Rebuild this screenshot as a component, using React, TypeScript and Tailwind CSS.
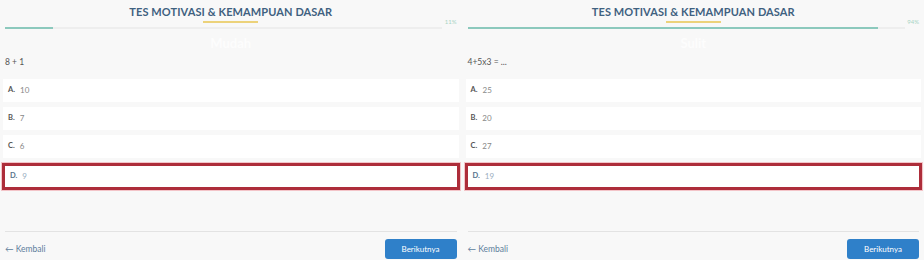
import React from "react";

type Option = { key: string; value: string };

type PanelProps = {
  percent: number;
  level: string;
  question: string;
  options: Option[];
  selected: string;
};

const font = { fontFamily: "Lato, 'Open Sans', sans-serif" };

function Panel({ percent, level, question, options, selected }: PanelProps) {
  return (
    <div className="w-[462px] h-[260px] flex flex-col bg-[#f8f8f8]">
      <div className="pt-[5px] flex flex-col items-center">
        <h1 className="text-[11px] leading-[13px] font-bold text-[#3f6180] tracking-[0.1px]">
          TES MOTIVASI &amp; KEMAMPUAN DASAR
        </h1>
        <div className="w-[55px] h-[1.5px] mt-[3px] bg-[#ecd27a]" />
      </div>
      <div className="flex items-start px-[5px] mt-[3px]">
        <div className="w-[437px] h-[2px] mt-[1px] bg-[#eeeeee]">
          <div className="h-full bg-[#8cc9bd]" style={{ width: `${percent}%` }} />
        </div>
        <span className="ml-auto -mt-[9px] text-[6px] text-[#a8d4c4]">{percent}%</span>
      </div>
      <div className="h-[22px] mt-[4px] flex items-center justify-center">
        <span className="text-[13px] font-bold text-[#fdfdfd]">{level}</span>
      </div>
      <p className="px-[5px] mt-[1px] text-[8.5px] leading-[12px] text-[#555]">{question}</p>
      <div className="mt-[11px] px-[3px] flex flex-col gap-[5px]">
        {options.map((o) =>
          o.key === selected ? (
            <div
              key={o.key}
              className="-mx-[1px] h-[27px] border-[3px] border-[#ad2d3a] ring-1 ring-[#f3c4c8] bg-white flex items-center px-[5px]"
            >
              <span className="text-[7.5px] font-bold text-[#56738c]">{o.key}.</span>
              <span className="ml-[5px] text-[8px] text-[#9aaec0]">{o.value}</span>
            </div>
          ) : (
            <div key={o.key} className="h-[23px] bg-white flex items-center px-[5px]">
              <span className="text-[7.5px] font-bold text-[#555]">{o.key}.</span>
              <span className="ml-[5px] text-[8px] text-[#888]">{o.value}</span>
            </div>
          )
        )}
      </div>
      <div className="mt-auto mx-[5px] border-t border-[#e3e3e3]" />
      <div className="flex items-center justify-between pl-[5px] pr-[5px] pt-[7px] pb-[1px]">
        <span className="text-[8.5px] text-[#5d7d9c]">&larr; Kembali</span>
        <button className="w-[72px] h-[20px] rounded-[3px] bg-[#2f80c9] text-white text-[8px]">
          Berikutnya
        </button>
      </div>
    </div>
  );
}

export default function App() {
  return (
    <div className="w-[924px] h-[260px] flex bg-[#f8f8f8]" style={font}>
      <Panel
        percent={11}
        level="Mudah"
        question="8 + 1"
        options={[
          { key: "A", value: "10" },
          { key: "B", value: "7" },
          { key: "C", value: "6" },
          { key: "D", value: "9" },
        ]}
        selected="D"
      />
      <div className="w-[1px]" />
      <Panel
        percent={94}
        level="Sulit"
        question="4+5x3 = ..."
        options={[
          { key: "A", value: "25" },
          { key: "B", value: "20" },
          { key: "C", value: "27" },
          { key: "D", value: "19" },
        ]}
        selected="D"
      />
    </div>
  );
}
